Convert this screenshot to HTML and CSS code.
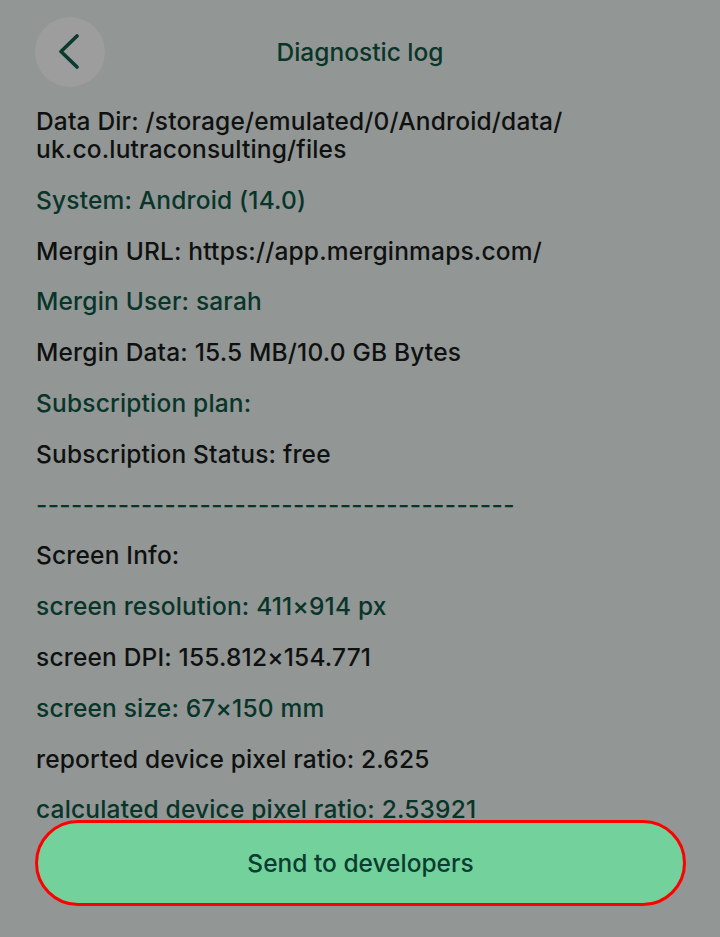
FILE: index.html
```html
<!DOCTYPE html>
<html>
<head>
<meta charset="utf-8">
<link rel="stylesheet" href="styles.css">
</head>
<body>
<div class="screen">
  <header class="header">
    <button class="back" aria-label="Back">
      <svg width="24" height="36" viewBox="0 0 24 36"><path d="M20 2 L4 17.5 L20 33" fill="none" stroke="#0b3a2e" stroke-width="3.6" stroke-linecap="round" stroke-linejoin="round"/></svg>
    </button>
    <h1 class="title">Diagnostic log</h1>
  </header>
  <div class="log">
    <p class="line dark">Data Dir: /storage/emulated/0/Android/data/<br>uk.co.lutraconsulting/files</p>
    <p class="line green">System: Android (14.0)</p>
    <p class="line dark">Mergin URL: https://app.merginmaps.com/</p>
    <p class="line green">Mergin User: sarah</p>
    <p class="line dark">Mergin Data: 15.5 MB/10.0 GB Bytes</p>
    <p class="line green">Subscription plan:</p>
    <p class="line dark">Subscription Status: free</p>
    <p class="line green dashes">-----------------------------------------</p>
    <p class="line dark">Screen Info:</p>
    <p class="line green">screen resolution: 411×914 px</p>
    <p class="line dark">screen DPI: 155.812×154.771</p>
    <p class="line green">screen size: 67×150 mm</p>
    <p class="line dark">reported device pixel ratio: 2.625</p>
    <p class="line green">calculated device pixel ratio: 2.53921</p>
  </div>
  <div class="footer">
    <button class="send">Send to developers</button>
  </div>
</div>
</body>
</html>
```
FILE: styles.css
```css
html, body {
  margin: 0;
  padding: 0;
  background: #929694;
  height: 100%;
  overflow: hidden;
}
.screen {
  font-family: Inter, "Noto Sans", sans-serif;
  width: 720px;
  height: 937px;
  position: relative;
}
.header {
  height: 107px;
  display: flex;
  justify-content: center;
  position: relative;
}
.back {
  position: absolute;
  left: 35px;
  top: 17px;
  width: 70px;
  height: 70px;
  border-radius: 50%;
  border: none;
  background: #9c9d9c;
  display: flex;
  align-items: center;
  justify-content: center;
  padding: 0 2px 0 0;
}
.title {
  margin: 37px 0 0 0;
  font-size: 24.5px;
  line-height: 30px;
  font-weight: 500;
  color: #093629;
}
.log {
  padding: 0 36px;
}
.line {
  margin: 0 0 22.8px 0;
  font-size: 24.5px;
  line-height: 28px;
  font-weight: 500;
  letter-spacing: 0.18px;
  white-space: nowrap;
}
.dashes { letter-spacing: 0.35px; }
.dark { color: #0f1111; }
.green { color: #08352a; }
.footer {
  position: absolute;
  left: 35px;
  right: 34px;
  top: 820px;
}
.send {
  width: 100%;
  height: 86px;
  border: 3px solid #ff0000;
  border-radius: 43px;
  background: #73d19c;
  color: #0a3d31;
  font-family: Inter, "Noto Sans", sans-serif;
  font-size: 24.5px;
  font-weight: 500;
  padding: 0;
}
```
